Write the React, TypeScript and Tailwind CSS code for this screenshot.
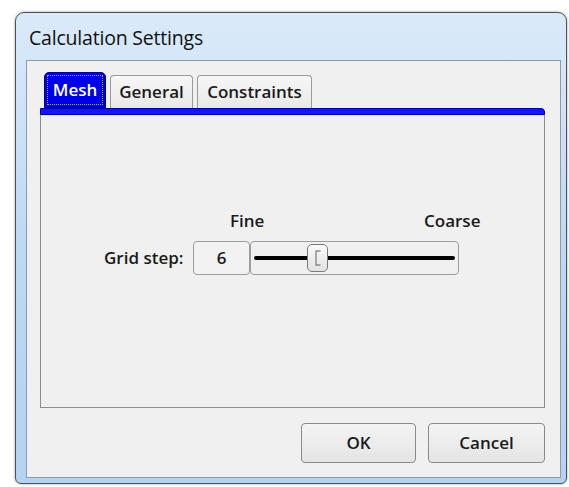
import { useState } from "react";

const tabs = ["Mesh", "General", "Constraints"];

const Thumb = () => (
  <div className="absolute left-[56px] top-[2px] w-[21px] h-[28px] rounded-[5px] border border-[#7a7a7a] bg-gradient-to-b from-[#fafafa] to-[#e2e2e2] flex items-center justify-center">
    <svg width="9" height="18" viewBox="0 0 9 18">
      <path d="M7 2 H3 V16 H7" fill="none" stroke="#8a8a8a" strokeWidth="1.4" strokeLinecap="round" strokeLinejoin="round" />
    </svg>
  </div>
);

const App = () => {
  const [active, setActive] = useState("Mesh");

  return (
    <div
      className="w-[569px] h-[487px] bg-white pt-[12px] pl-[15px] text-[#1a1a1a]"
      style={{ fontFamily: '"Open Sans", "Noto Sans", sans-serif' }}
    >
      {/* window frame */}
      <div className="w-[552px] h-[472px] flex flex-col border border-[#505050] rounded-t-[9px] rounded-b-[6px] bg-gradient-to-b from-[#dbeafa] via-[#bcd9f5] to-[#b4d3f2] shadow-[0_0_3px_rgba(0,0,0,0.35)]">
        <div className="h-[47px] pl-[13px] pt-[3px] flex items-center text-[19.5px] text-[#111] tracking-[-0.2px]">
          Calculation Settings
        </div>

        {/* client area */}
        <div className="flex-1 ml-[10px] mr-[5px] mb-[5px] border border-[#8f9aa5] bg-[#f0f0f0] pt-[11px] pl-[13px] pr-[15px] flex flex-col">
          <div className="flex gap-[4px] pl-[4px] h-[36px] items-end">
            {tabs.map((t) =>
              t === active ? (
                <button
                  key={t}
                  onClick={() => setActive(t)}
                  className="h-[36px] w-[62px] rounded-t-[5px] border border-[#00008a] bg-[#0000e8] p-[2px]"
                >
                  <div className="h-full w-full border border-dotted border-[#9da0ff] flex items-center justify-center text-[17px] font-semibold text-white">
                    {t}
                  </div>
                </button>
              ) : (
                <button
                  key={t}
                  onClick={() => setActive(t)}
                  className={
                    "h-[33px] rounded-t-[4px] border border-b-0 border-[#9a9a9a] bg-gradient-to-b from-[#f7f7f7] to-[#e8e8e8] text-[17px] font-semibold text-[#1a1a1a] flex items-center justify-center " +
                    (t === "General" ? "w-[83px]" : "w-[115px]")
                  }
                >
                  {t}
                </button>
              )
            )}
          </div>

          {/* blue strip under the tab row */}
          <div className="h-[7px] rounded-tr-[4px] border border-[#0000a8] bg-[#1414ff]" />

          <div className="h-[293px] border border-t-0 border-[#8e8e8e] bg-[#f0f0f0] pt-[96px] pl-[63px] shadow-[inset_0_1px_0_#dcdcdc]">
            <div className="flex pl-[126px] text-[17px] font-semibold leading-[20px]">
              <span className="w-[194px]">Fine</span>
              <span>Coarse</span>
            </div>

            <div className="flex items-center mt-[10px]">
              <span className="text-[17px] font-semibold w-[89px]">Grid step:</span>
              <div className="w-[57px] h-[34px] rounded-[4px] border border-[#9c9c9c] bg-[#f2f2f2] flex items-center justify-center text-[17px] font-semibold">
                6
              </div>
              <div className="relative w-[209px] h-[34px] rounded-[4px] border border-[#9c9c9c] bg-[#f0f0f0] flex items-center px-[3px]">
                <div className="h-[4px] w-full rounded-full bg-black" />
                <Thumb />
              </div>
            </div>
          </div>

          <div className="flex justify-end gap-[12px] mt-[15px]">
            <button className="w-[115px] h-[40px] rounded-[4px] border border-[#8a8a8a] bg-gradient-to-b from-[#f4f4f4] to-[#e4e4e4] text-[17px] font-semibold">
              OK
            </button>
            <button className="w-[117px] h-[40px] rounded-[4px] border border-[#8a8a8a] bg-gradient-to-b from-[#f4f4f4] to-[#e4e4e4] text-[17px] font-semibold">
              Cancel
            </button>
          </div>
        </div>
      </div>
    </div>
  );
};

export default App;
